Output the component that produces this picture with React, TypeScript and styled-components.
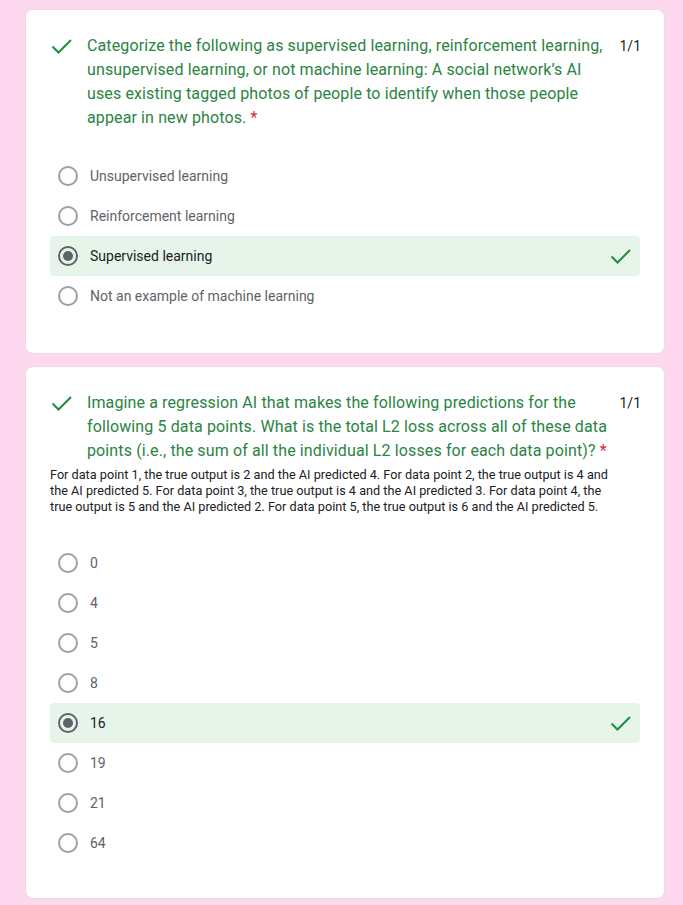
import React from "react";
import styled, { createGlobalStyle } from "styled-components";

const Global = createGlobalStyle`
  html, body { margin: 0; padding: 0; background: #fdd8ef; }
  body { font-family: Roboto, "Liberation Sans", Arial, sans-serif; }
`;

const Page = styled.div`
  padding: 9px 18px 20px 25px;
  display: flex;
  flex-direction: column;
  gap: 12px;
`;

const Card = styled.section`
  box-sizing: border-box;
  width: 640px;
  background: #fff;
  border: 1px solid #e8dbe3;
  border-radius: 8px;
  padding: 24px 23px 0 23px;
`;

const Header = styled.div`
  display: flex;
  align-items: flex-start;
`;

const IconBox = styled.div`
  width: 24px;
  height: 24px;
  flex: none;
  margin-right: 14px;
  display: flex;
  align-items: center;
  justify-content: center;
`;

const Title = styled.div`
  flex: 1;
  font-size: 16px;
  line-height: 24px;
  color: #2a8442;
  letter-spacing: 0.12px;
`;

const Req = styled.span`
  color: #d93025;
`;

const Score = styled.div`
  flex: none;
  margin-left: 6px;
  font-size: 14px;
  line-height: 24px;
  color: #202124;
`;

const Desc = styled.div`
  margin: 4px 0 0 1px;
  padding-bottom: 2px;
  font-size: 12.7px;
  line-height: 16px;
  color: #202124;
  max-width: 566px;
`;

const List = styled.div<{ $bottom: number }>`
  margin-top: 26px;
  margin-bottom: ${(p) => p.$bottom}px;
  display: flex;
  flex-direction: column;
`;

const Row = styled.div<{ $correct?: boolean }>`
  height: 40px;
  box-sizing: border-box;
  margin: 0 1px;
  padding: 0 8px;
  display: flex;
  align-items: center;
  border-radius: 4px;
  background: ${(p) => (p.$correct ? "#e6f4ea" : "transparent")};
`;

const Radio = styled.span<{ $checked?: boolean }>`
  box-sizing: border-box;
  width: 20px;
  height: 20px;
  flex: none;
  border-radius: 50%;
  border: 2px solid ${(p) => (p.$checked ? "#5f6368" : "#9aa0a6")};
  display: flex;
  align-items: center;
  justify-content: center;
  &::after {
    content: "";
    display: ${(p) => (p.$checked ? "block" : "none")};
    width: 10px;
    height: 10px;
    border-radius: 50%;
    background: #5f6368;
  }
`;

const Label = styled.span<{ $checked?: boolean }>`
  margin-left: 12px;
  flex: 1;
  font-size: 14px;
  line-height: 20px;
  color: ${(p) => (p.$checked ? "#202124" : "#5f6368")};
`;

const Check = ({ size = 24 }: { size?: number }) => (
  <svg width={size} height={size} viewBox="0 0 24 24" fill="none">
    <polyline
      points="3.5,12.5 9.5,18.5 22,6"
      stroke="#1e8e3e"
      strokeWidth="2"
      strokeLinecap="butt"
      strokeLinejoin="miter"
    />
  </svg>
);

type Q = {
  title: string;
  desc?: string;
  options: string[];
  answer: number;
  bottom: number;
};

const questions: Q[] = [
  {
    title:
      "Categorize the following as supervised learning, reinforcement learning, unsupervised learning, or not machine learning: A social network\u2019s AI uses existing tagged photos of people to identify when those people appear in new photos.",
    options: [
      "Unsupervised learning",
      "Reinforcement learning",
      "Supervised learning",
      "Not an example of machine learning",
    ],
    answer: 2,
    bottom: 37,
  },
  {
    title:
      "Imagine a regression AI that makes the following predictions for the following 5 data points. What is the total L2 loss across all of these data points (i.e., the sum of all the individual L2 losses for each data point)?",
    desc:
      "For data point 1, the true output is 2 and the AI predicted 4. For data point 2, the true output is 4 and the AI predicted 5. For data point 3, the true output is 4 and the AI predicted 3. For data point 4, the true output is 5 and the AI predicted 2. For data point 5, the true output is 6 and the AI predicted 5.",
    options: ["0", "4", "5", "8", "16", "19", "21", "64"],
    answer: 4,
    bottom: 35,
  },
];

export default function App() {
  return (
    <>
      <Global />
      <Page>
        {questions.map((q, qi) => (
          <Card key={qi}>
            <Header>
              <IconBox>
                <Check />
              </IconBox>
              <Title>
                {q.title} <Req>*</Req>
              </Title>
              <Score>1/1</Score>
            </Header>
            {q.desc && <Desc>{q.desc}</Desc>}
            <List $bottom={q.bottom}>
              {q.options.map((o, i) => {
                const c = i === q.answer;
                return (
                  <Row key={o} $correct={c}>
                    <Radio $checked={c} />
                    <Label $checked={c}>{o}</Label>
                    {c && <Check />}
                  </Row>
                );
              })}
            </List>
          </Card>
        ))}
      </Page>
    </>
  );
}
